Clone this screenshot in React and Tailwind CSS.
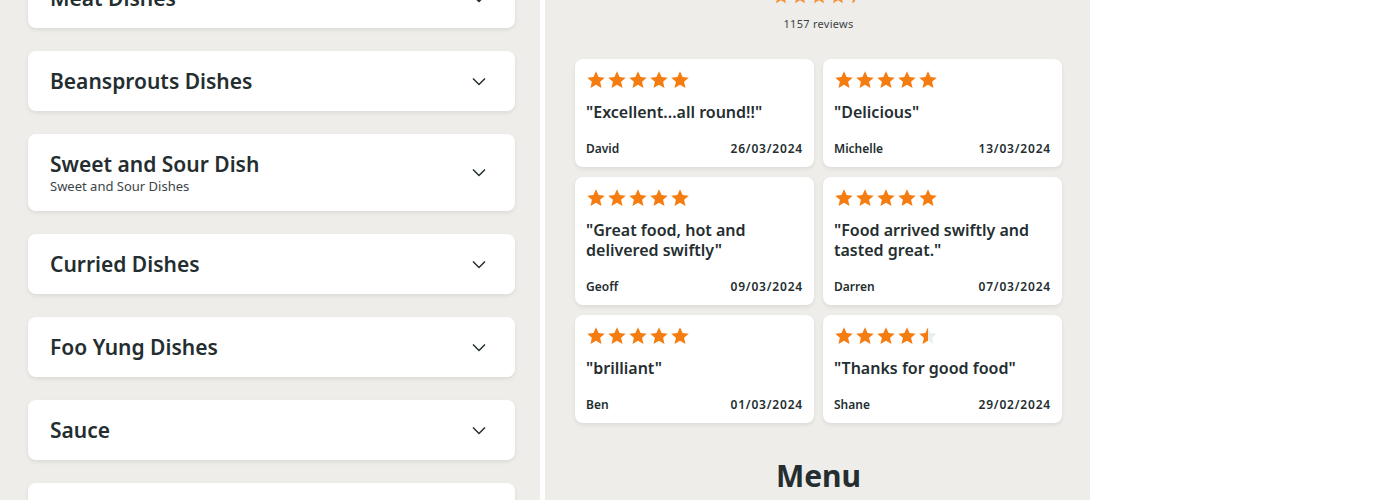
import React from 'react';

const font = { fontFamily: '"Noto Sans", "Liberation Sans", sans-serif' };

const categories = [
  { title: 'Meat Dishes' },
  { title: 'Beansprouts Dishes' },
  { title: 'Sweet and Sour Dish', sub: 'Sweet and Sour Dishes' },
  { title: 'Curried Dishes' },
  { title: 'Foo Yung Dishes' },
  { title: 'Sauce' },
  { title: 'Soup' },
];

const reviews = [
  { rating: 5, text: '"Excellent...all round!!"', name: 'David', date: '26/03/2024' },
  { rating: 5, text: '"Delicious"', name: 'Michelle', date: '13/03/2024' },
  { rating: 5, text: '"Great food, hot and delivered swiftly"', name: 'Geoff', date: '09/03/2024' },
  { rating: 5, text: '"Food arrived swiftly and tasted great."', name: 'Darren', date: '07/03/2024' },
  { rating: 5, text: '"brilliant"', name: 'Ben', date: '01/03/2024' },
  { rating: 4.5, text: '"Thanks for good food"', name: 'Shane', date: '29/02/2024' },
];

const STAR = 'M12 1.6l3.1 6.9 7.4.7-5.6 5 1.7 7.4L12 17.8l-6.6 3.8 1.7-7.4-5.6-5 7.4-.7z';

// one star, fill = fraction of orange (0..1)
const Star = ({ fill = 1, size = 20, id }) => (
  <svg width={size} height={size} viewBox="0 0 24 24">
    <defs>
      <linearGradient id={id}>
        <stop offset={fill} stopColor="#f47c10" />
        <stop offset={fill} stopColor="#e9eef0" />
      </linearGradient>
    </defs>
    <path d={STAR} fill={`url(#${id})`} />
  </svg>
);

const Stars = ({ rating, size, prefix }) => (
  <div className="flex gap-[1px]">
    {[0, 1, 2, 3, 4].map((i) => (
      <Star key={i} id={`${prefix}-${i}`} size={size} fill={Math.max(0, Math.min(1, rating - i))} />
    ))}
  </div>
);

const Chevron = () => (
  <svg width="14" height="9" viewBox="0 0 14 9" fill="none">
    <polyline points="1,1.5 7,7.5 13,1.5" stroke="#242e30" strokeWidth="1.5" />
  </svg>
);

export default function App() {
  return (
    <div className="w-[1400px] h-[500px] overflow-hidden bg-white flex text-[#242e30]" style={font}>
      {/* category list */}
      <div className="w-[540px] bg-[#efedea] pl-[28px] pr-[25px]">
        <div className="-mt-[32px] flex flex-col gap-[23px]">
          {categories.map((c) => (
            <div
              key={c.title}
              className="bg-white rounded-lg shadow-[0_2px_4px_rgba(0,0,0,0.08)] pl-[22px] pr-[29px] py-4 flex items-center justify-between"
            >
              <div>
                <div className="text-[21px] leading-[28px] font-semibold">{c.title}</div>
                {c.sub && <div className="text-[13px] leading-[17px] text-[#3c4446]">{c.sub}</div>}
              </div>
              <Chevron />
            </div>
          ))}
        </div>
      </div>

      {/* reviews */}
      <div className="w-[545px] ml-[5px] bg-[#efedea] pl-[30px] pr-[28px]">
        <div className="-mt-[13px] flex flex-col items-center">
          <div className="opacity-80">
            <Stars rating={4.4} size={18} prefix="top" />
          </div>
          <div className="mt-[11px] text-[11px] leading-[16px] text-[#3c4446] tracking-wide">1157 reviews</div>
        </div>

        <div className="mt-[27px] grid grid-cols-2 gap-x-[9px] gap-y-[10px]">
          {reviews.map((r, idx) => (
            <div
              key={idx}
              className="bg-white rounded-lg shadow-[0_2px_4px_rgba(0,0,0,0.08)] pt-[11px] pb-[10px] px-[11px] flex flex-col"
            >
              <Stars rating={r.rating} size={20} prefix={`r${idx}`} />
              <div className="mt-[12px] text-[16px] leading-[20px] font-semibold">{r.text}</div>
              <div className="mt-auto pt-[19px] flex justify-between text-[12px] leading-[16px] font-semibold">
                <span>{r.name}</span>
                <span className="tracking-[0.8px]">{r.date}</span>
              </div>
            </div>
          ))}
        </div>

        <h2 className="mt-[33px] text-center text-[30px] leading-[40px] font-bold">Menu</h2>
      </div>
    </div>
  );
}
